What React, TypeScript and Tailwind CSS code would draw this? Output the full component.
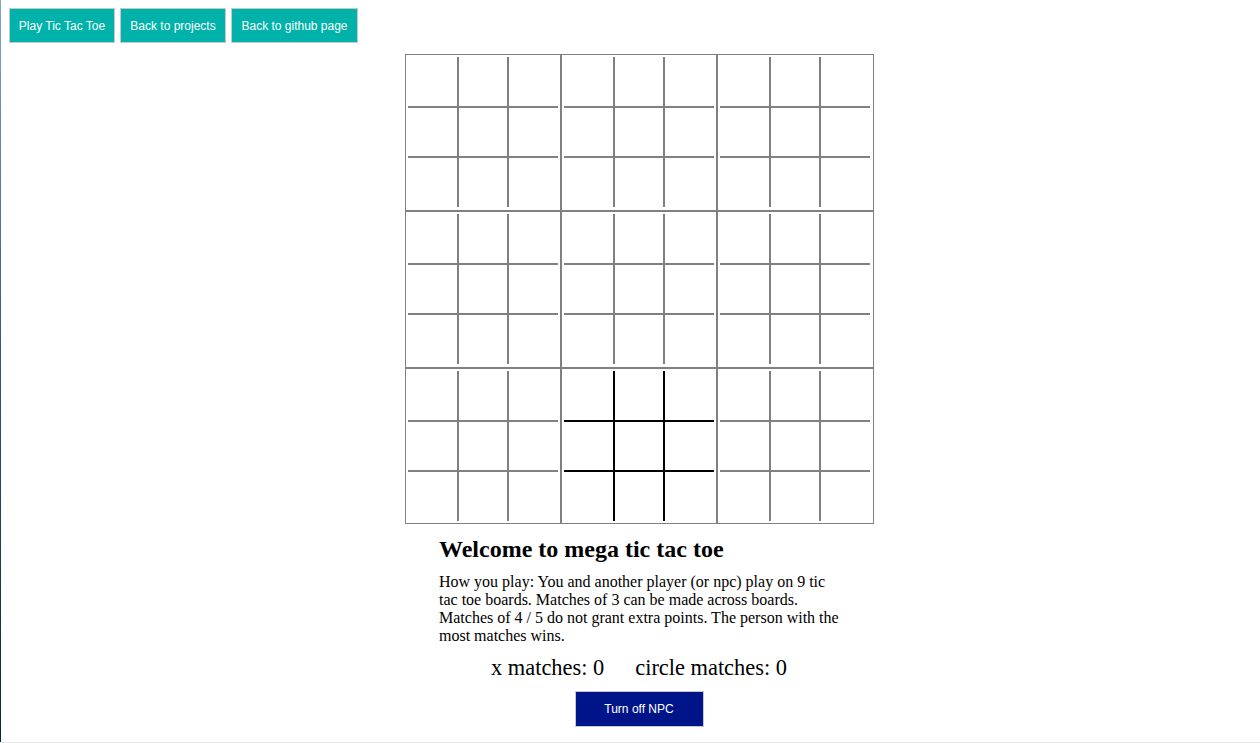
import React from 'react';

const colBorder = ['border-r', 'border-x', 'border-l'];
const rowBorder = ['border-b', 'border-y', 'border-t'];

function SmallBoard({ active }: { active: boolean }) {
  const line = active ? 'border-black' : 'border-[#808080]';
  return (
    <div className="border border-[#808080] pt-[2px] pl-[2px]">
      <div className="grid grid-cols-[50px_50px_50px] grid-rows-[50px_50px_50px]">
        {Array.from({ length: 9 }).map((_, i) => (
          <button
            key={i}
            className={`${colBorder[i % 3]} ${rowBorder[Math.floor(i / 3)]} ${line} bg-white`}
          />
        ))}
      </div>
    </div>
  );
}

export default function App() {
  return (
    <div className="min-h-[743px] flex bg-white border-b border-[#e6e6e6] font-['Liberation_Serif',serif] text-black">
      {/* window edge */}
      <div className="w-px bg-linear-to-b from-[#7fa9c6] via-[#2b5878] to-[#05263f]" />

      <div className="flex-1">
        {/* Nav */}
        <div className="flex gap-[5px] pl-[8px] pt-[8px] font-['Liberation_Sans',Arial,sans-serif] text-[12px] text-white">
          <button className="w-[106px] h-[35px] bg-[#00b2a9] border border-[#c8c8c8]">Play Tic Tac Toe</button>
          <button className="w-[106px] h-[35px] bg-[#00b2a9] border border-[#c8c8c8]">Back to projects</button>
          <button className="w-[127px] h-[35px] bg-[#00b2a9] border border-[#c8c8c8]">Back to github page</button>
        </div>

        <div className="flex flex-col items-center pl-[17px]">
          {/* Board */}
          <div className="mt-[11px] grid grid-cols-[156px_156px_157px] grid-rows-[157px_157px_156px]">
            {Array.from({ length: 9 }).map((_, i) => (
              <SmallBoard key={i} active={i === 7} />
            ))}
          </div>

          {/* Info */}
          <div className="w-[400px]">
            <h2 className="mt-[11px] text-[24px] leading-[28px] font-bold">Welcome to mega tic tac toe</h2>
            <p className="mt-[10px] text-[16px] leading-[18px]">
              How you play: You and another player (or npc) play on 9 tic tac toe boards. Matches of 3 can be made
              across boards. Matches of 4 / 5 do not grant extra points. The person with the most matches wins.
            </p>
          </div>

          <div className="mt-[10px] flex gap-[31px] text-[22.4px] leading-[26px]">
            <span>x matches: 0</span>
            <span>circle matches: 0</span>
          </div>

          <button className="mt-[10px] w-[129px] h-[36px] bg-[#001489] border border-[#c8c8c8] text-white text-[12px] font-['Liberation_Sans',Arial,sans-serif]">
            Turn off NPC
          </button>
        </div>
      </div>
    </div>
  );
}
